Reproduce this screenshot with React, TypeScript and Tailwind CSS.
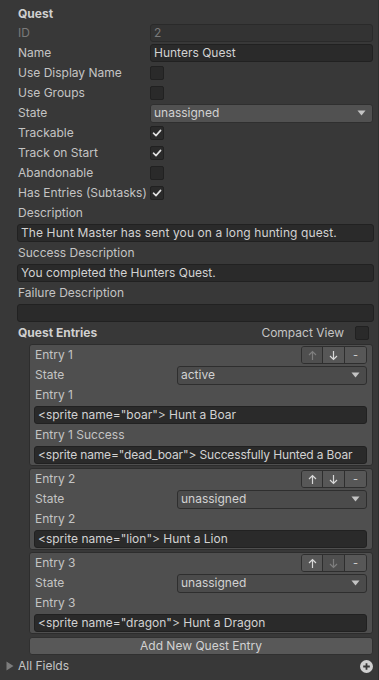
import React from 'react';

const font = { fontFamily: 'Inter, "Noto Sans", sans-serif' };

const Check = () => (
  <svg width="10" height="10" viewBox="0 0 10 10" className="text-[#e0e0e0]">
    <path d="M1.5 5.2 L4 7.6 L8.6 2.4" fill="none" stroke="currentColor" strokeWidth="1.6" strokeLinecap="round" strokeLinejoin="round" />
  </svg>
);

const Checkbox = ({ on }: { on?: boolean }) => (
  <div className="w-[14px] h-[14px] rounded-[2px] bg-[#2a2a2a] border border-[#212121] flex items-center justify-center">
    {on && <Check />}
  </div>
);

const Caret = () => (
  <svg width="9" height="6" viewBox="0 0 9 6" className="text-[#c4c4c4]">
    <path d="M0.5 0.5 H8.5 L4.5 5.5 Z" fill="currentColor" />
  </svg>
);

const Row = ({ label, children, dim }: { label: string; children?: React.ReactNode; dim?: boolean }) => (
  <div className="h-[20px] flex items-center pl-[18px] pr-[5px]">
    <span className={`w-[132px] shrink-0 ${dim ? 'text-[#7a7a7a]' : ''}`}>{label}</span>
    <div className="flex-1 flex items-center">{children}</div>
  </div>
);

const TextBox = ({ value, className = '' }: { value: string; className?: string }) => (
  <div className={`h-[18px] flex items-center px-[3px] rounded-[3px] bg-[#2a2a2a] border border-[#212121] text-[#d2d2d2] whitespace-nowrap overflow-hidden ${className}`}>
    {value}
  </div>
);

const Dropdown = ({ value, inset }: { value: string; inset?: boolean }) => (
  <div className={`h-[19px] w-full flex items-center justify-between pl-[3px] pr-[6px] rounded-[3px] border ${inset ? 'bg-[#4b4b4b] border-[#2e2e2e]' : 'bg-[#515151] border-[#2f2f2f]'} text-[#d2d2d2]`}>
    <span>{value}</span>
    <Caret />
  </div>
);

const ArrowIcon = ({ up, dim }: { up?: boolean; dim?: boolean }) => (
  <svg width="9" height="11" viewBox="0 0 9 11" className={dim ? 'text-[#7e7e7e]' : 'text-[#d8d8d8]'} style={{ transform: up ? undefined : 'rotate(180deg)' }}>
    <path d="M4.5 10 V1.5 M1 5 L4.5 1.5 L8 5" fill="none" stroke="currentColor" strokeWidth="1.2" />
  </svg>
);

const MoveButtons = ({ upDim, downDim }: { upDim?: boolean; downDim?: boolean }) => (
  <div className="flex h-[18px] rounded-[3px] border border-[#2e2e2e] overflow-hidden">
    <div className={`w-[20px] flex items-center justify-center ${upDim ? 'bg-[#4f4f4f]' : 'bg-[#575757]'}`}>
      <ArrowIcon up dim={upDim} />
    </div>
    <div className={`w-[22px] flex items-center justify-center border-l border-[#2e2e2e] ${downDim ? 'bg-[#4f4f4f]' : 'bg-[#575757]'}`}>
      <ArrowIcon dim={downDim} />
    </div>
    <div className="w-[22px] flex items-center justify-center border-l border-[#2e2e2e] bg-[#575757] text-[#d2d2d2] text-[11px]">-</div>
  </div>
);

type Entry = { n: number; state: string; text: string; success?: string; upDim?: boolean; downDim?: boolean };

const entries: Entry[] = [
  { n: 1, state: 'active', text: '<sprite name="boar"> Hunt a Boar', success: '<sprite name="dead_boar"> Successfully Hunted a Boar', upDim: true },
  { n: 2, state: 'unassigned', text: '<sprite name="lion"> Hunt a Lion' },
  { n: 3, state: 'unassigned', text: '<sprite name="dragon"> Hunt a Dragon', downDim: true },
];

const EntryBox = ({ e }: { e: Entry }) => (
  <div className="bg-[#4f4f4f] border border-[#2d2d2d] rounded-[3px] pl-[4px] pr-[5px]">
    <div className="h-[20px] flex items-center justify-between pl-[1px]">
      <span>Entry {e.n}</span>
      <MoveButtons upDim={e.upDim} downDim={e.downDim} />
    </div>
    <div className="h-[20px] flex items-center pl-[1px]">
      <span className="w-[142px] shrink-0">State</span>
      <Dropdown value={e.state} inset />
    </div>
    <div className="h-[20px] flex items-center pl-[1px]">Entry {e.n}</div>
    <div className="h-[20px] flex items-center">
      <TextBox value={e.text} className="w-full" />
    </div>
    {e.success && (
      <>
        <div className="h-[20px] flex items-center pl-[1px]">Entry {e.n} Success</div>
        <div className="h-[20px] flex items-center">
          <TextBox value={e.success} className="w-full tracking-[-0.15px]" />
        </div>
      </>
    )}
  </div>
);

export default function App() {
  return (
    <div style={font} className="w-[379px] h-[680px] bg-[#383838] text-[#c4c4c4] text-[12px] overflow-hidden border-r border-[#2f2f2f]">
      <div className="pt-[4px]">
        <div className="h-[19px] flex items-center pl-[18px] font-bold text-[#d0d0d0]">Quest</div>
        <Row label="ID" dim>
          <div className="h-[18px] w-full flex items-center px-[3px] rounded-[3px] bg-[#333333] border border-[#2a2a2a] text-[#7a7a7a]">2</div>
        </Row>
        <Row label="Name">
          <TextBox value="Hunters Quest" className="w-full" />
        </Row>
        <Row label="Use Display Name"><Checkbox /></Row>
        <Row label="Use Groups"><Checkbox /></Row>
        <Row label="State"><Dropdown value="unassigned" /></Row>
        <Row label="Trackable"><Checkbox on /></Row>
        <Row label="Track on Start"><Checkbox on /></Row>
        <Row label="Abandonable"><Checkbox /></Row>
        <Row label="Has Entries (Subtasks)"><Checkbox on /></Row>

        <div className="h-[20px] flex items-center pl-[18px]">Description</div>
        <div className="h-[20px] flex items-center pl-[17px] pr-[4px]">
          <TextBox value="The Hunt Master has sent you on a long hunting quest." className="w-full tracking-[0.1px]" />
        </div>
        <div className="h-[20px] flex items-center pl-[18px]">Success Description</div>
        <div className="h-[20px] flex items-center pl-[17px] pr-[4px]">
          <TextBox value="You completed the Hunters Quest." className="w-full" />
        </div>
        <div className="h-[20px] flex items-center pl-[18px]">Failure Description</div>
        <div className="h-[20px] flex items-center pl-[17px] pr-[4px]">
          <TextBox value="" className="w-full" />
        </div>

        <div className="h-[20px] flex items-center justify-between pl-[18px] pr-[9px]">
          <span className="font-bold text-[#d0d0d0]">Quest Entries</span>
          <div className="flex items-center gap-[11px]">
            <span>Compact View</span>
            <Checkbox />
          </div>
        </div>

        <div className="ml-[29px] mr-[5px] mt-[1px] flex flex-col gap-[2px]">
          {entries.map((e) => (
            <EntryBox key={e.n} e={e} />
          ))}
          <div className="mt-[1px] h-[18px] flex items-center justify-center rounded-[3px] bg-[#585858] border border-[#303030] text-[#d2d2d2]">
            Add New Quest Entry
          </div>
        </div>

        <div className="h-[22px] flex items-center justify-between pl-[6px] pr-[5px]">
          <div className="flex items-center gap-[4px]">
            <svg width="8" height="10" viewBox="0 0 8 10" className="text-[#7c7c7c]">
              <path d="M0.5 0.5 L7.5 5 L0.5 9.5 Z" fill="currentColor" />
            </svg>
            <span>All Fields</span>
          </div>
          <svg width="13" height="13" viewBox="0 0 13 13">
            <circle cx="6.5" cy="6.5" r="6.5" fill="#d0d0d0" />
            <path d="M6.5 3.2 V9.8 M3.2 6.5 H9.8" stroke="#383838" strokeWidth="1.8" />
          </svg>
        </div>
      </div>
    </div>
  );
}
